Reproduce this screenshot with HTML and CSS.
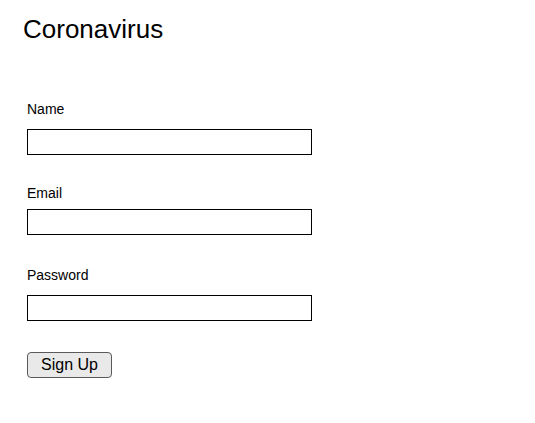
FILE: index.html
```html
<!DOCTYPE html>
<html lang="en">
<head>
<meta charset="utf-8">
<title>Coronavirus</title>
<link rel="stylesheet" href="styles.css">
</head>
<body>
<header class="header">
  <h1 class="title">Coronavirus</h1>
</header>
<form class="form">
  <div class="field field--name">
    <label class="label" for="name">Name</label>
    <input class="input" id="name" type="text">
  </div>
  <div class="field field--email">
    <label class="label" for="email">Email</label>
    <input class="input" id="email" type="email">
  </div>
  <div class="field field--password">
    <label class="label" for="password">Password</label>
    <input class="input" id="password" type="password">
  </div>
  <button class="button" type="button">Sign Up</button>
</form>
</body>
</html>
```

FILE: styles.css
```css
html, body {
  margin: 0;
  padding: 0;
  background: #ffffff;
}

body {
  font-family: "Liberation Sans", Arial, sans-serif;
  color: #000000;
}

.header {
  padding: 14px 0 0 23px;
}

.title {
  margin: 0;
  font-size: 26px;
  line-height: 30px;
  font-weight: normal;
}

.form {
  display: flex;
  flex-direction: column;
  align-items: flex-start;
  padding-left: 27px;
  margin-top: 57px;
}

.field {
  display: flex;
  flex-direction: column;
  align-items: flex-start;
  gap: 12px;
}

.field--email {
  margin-top: 30px;
  gap: 8px;
}

.field--password {
  margin-top: 32px;
}

.label {
  font-size: 14px;
  line-height: 16px;
}

.input {
  box-sizing: border-box;
  width: 285px;
  height: 26px;
  margin: 0;
  padding: 0 4px;
  border: 1px solid #000000;
  border-radius: 0;
  background: #ffffff;
  font-family: "Liberation Sans", Arial, sans-serif;
  font-size: 14px;
  outline: none;
}

.button {
  box-sizing: border-box;
  margin-top: 31px;
  width: 85px;
  height: 26px;
  padding: 0;
  border: 1px solid #5a5a5a;
  border-radius: 4px;
  background: #e9e9e9;
  font-family: "Liberation Sans", Arial, sans-serif;
  font-size: 16px;
  line-height: 18px;
  color: #000000;
}
```
